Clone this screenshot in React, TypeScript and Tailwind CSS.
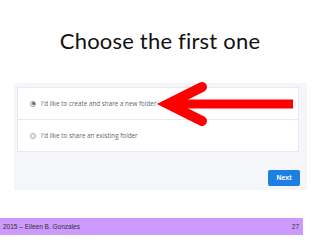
export default function App() {
  return (
    <div className="w-[320px] h-[240px] bg-white relative overflow-hidden flex flex-col">
      {/* Slide title */}
      <div className="h-[83px] flex items-center justify-center pb-[2px]">
        <h1 className="text-[22px] text-[#111] font-normal tracking-[0.2px]" style={{ fontFamily: 'Lato, "Open Sans", sans-serif' }}>
          Choose the first one
        </h1>
      </div>

      {/* Screenshot panel */}
      <div className="ml-[14px] w-[293px] h-[107px] bg-[#f4f6f9] pt-[4px] pl-[3px] flex flex-col relative" style={{ fontFamily: '"Open Sans", sans-serif' }}>
        <div className="w-[282px] bg-white border border-[#e6e9ee] flex flex-col">
          <div className="h-[32px] flex items-center pl-[12px] gap-[5px] border-b border-[#e6e9ee]">
            <span className="w-[6px] h-[6px] rounded-full border border-[#999] flex items-center justify-center">
              <span className="w-[3px] h-[3px] rounded-full bg-[#666]"></span>
            </span>
            <span className="text-[6.3px] text-[#666]">I'd like to create and share a new folder</span>
          </div>
          <div className="h-[31px] flex items-center pl-[12px] gap-[5px]">
            <span className="w-[6px] h-[6px] rounded-full border border-[#aaa] bg-[#f2f2f2]"></span>
            <span className="text-[6.3px] text-[#666]">I'd like to share an existing folder</span>
          </div>
        </div>
        <div className="flex justify-end mt-[18px] pr-[7px]">
          <button className="w-[32px] h-[16px] rounded-[2px] bg-[#1d7fe2] text-white text-[7px] font-bold flex items-center justify-center" style={{ fontFamily: '"Liberation Sans", Arial, sans-serif' }}>
            Next
          </button>
        </div>
      </div>

      {/* Red annotation arrow */}
      <svg className="absolute left-0 top-0" width="320" height="240" viewBox="0 0 320 240">
        <line x1="172" y1="104" x2="293" y2="104" stroke="#ff0000" strokeWidth="9" />
        <polyline points="202,87 168,104 202,121" fill="none" stroke="#ff0000" strokeWidth="10" strokeLinecap="round" strokeLinejoin="miter" />
      </svg>

      {/* Footer */}
      <div className="mt-[28px] w-[303px] h-[17px] bg-[#cc99ff] flex items-center justify-between px-[3px] text-[6.5px] text-[#333]" style={{ fontFamily: '"Liberation Sans", Arial, sans-serif' }}>
        <span>2015 – Eileen B. Gonzales</span>
        <span className="pr-[1px]">27</span>
      </div>
    </div>
  );
}
